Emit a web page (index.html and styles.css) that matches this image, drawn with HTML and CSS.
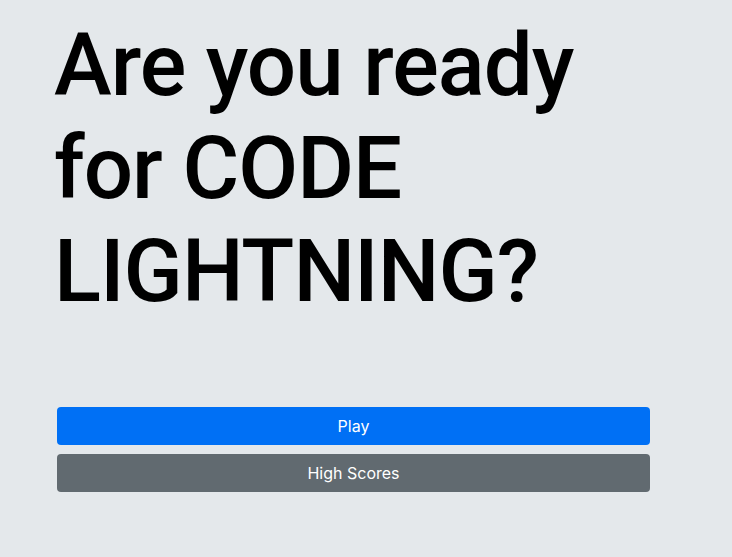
FILE: index.html
```html
<!DOCTYPE html>
<html>
<head>
<meta charset="utf-8">
<link rel="stylesheet" href="styles.css">
</head>
<body>
<main class="container">
  <h1 class="title">Are you ready for CODE LIGHTNING?</h1>
  <div class="actions">
    <button class="btn btn-primary">Play</button>
    <button class="btn btn-secondary">High Scores</button>
  </div>
</main>
</body>
</html>
```
FILE: styles.css
```css
html, body {
  margin: 0;
  padding: 0;
  background: #e4e8eb;
  font-family: Inter, "Liberation Sans", sans-serif;
}
.container {
  width: 593px;
  padding: 14px 0 0 57px;
}
.title {
  margin: 0 0 84px -3px;
  font-family: Roboto, Inter, sans-serif;
  font-size: 87px;
  line-height: 103px;
  font-weight: 500;
  color: #000;
  letter-spacing: -1px;
}
.actions {
  display: flex;
  flex-direction: column;
  gap: 9px;
}
.btn {
  height: 38px;
  border: none;
  border-radius: 4px;
  color: #fff;
  font-family: Inter, "Liberation Sans", sans-serif;
  font-size: 16px;
  font-weight: 400;
}
.btn-primary { background: #0070f5; }
.btn-secondary { background: #616a70; }
```
